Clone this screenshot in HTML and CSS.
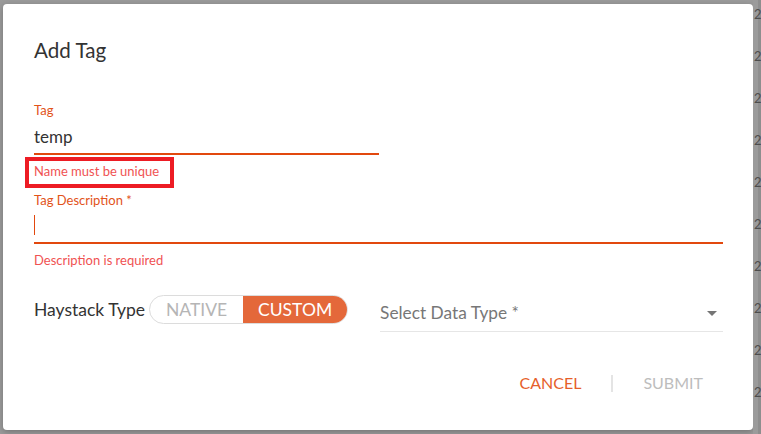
FILE: index.html
```html
<!DOCTYPE html>
<html lang="en">
<head>
<meta charset="utf-8">
<title>Add Tag</title>
<link rel="stylesheet" href="styles.css">
</head>
<body>
  <div class="dialog">
    <h2 class="title">Add Tag</h2>

    <div class="field field-tag">
      <div class="label">Tag</div>
      <div class="input">temp</div>
    </div>
    <div class="helper marked">Name must be unique</div>

    <div class="field field-desc">
      <div class="label">Tag Description *</div>
      <div class="input"><div class="caret"></div></div>
    </div>
    <div class="helper">Description is required</div>

    <div class="type-row">
      <div class="type-label">Haystack Type</div>
      <div class="toggle">
        <div class="seg seg-native">NATIVE</div>
        <div class="seg seg-custom">CUSTOM</div>
      </div>
      <div class="select">
        <span class="select-text">Select Data Type *</span>
        <span class="arrow"></span>
      </div>
    </div>

    <div class="actions">
      <div class="btn btn-cancel">CANCEL</div>
      <div class="sep"></div>
      <div class="btn btn-submit">SUBMIT</div>
    </div>
  </div>
  <div class="bg-col">
    <span>2</span><span>2</span><span>2</span><span>2</span><span>2</span><span>2</span><span>2</span><span>2</span><span>2</span><span>2</span>
  </div>
</body>
</html>
```

FILE: styles.css
```css
html, body {
  margin: 0;
  padding: 0;
}
body {
  width: 761px;
  height: 434px;
  overflow: hidden;
  background: #9b9b9b;
  display: flex;
  align-items: flex-start;
  padding: 4px 0 0 3px;
  box-sizing: border-box;
  font-family: Lato, "Open Sans", sans-serif;
}
.dialog {
  width: 750px;
  height: 426px;
  flex: none;
  background: #fff;
  border-radius: 4px;
  box-sizing: border-box;
  padding: 34px 30px 0 31px;
  box-shadow: 0 2px 6px rgba(0,0,0,0.25);
}
.title {
  margin: 0;
  font-size: 20.6px;
  line-height: 24px;
  font-weight: 400;
  color: #333;
}
.field-tag {
  width: 345px;
  margin-top: 40px;
}
.label {
  font-size: 13px;
  line-height: 16px;
  color: #e2531a;
}
.input {
  padding: 7px 0 4px;
  height: 24px;
  font-size: 17px;
  line-height: 24px;
  color: #333;
  border-bottom: 2px solid #e2480e;
}
.helper {
  margin-top: 8px;
  font-size: 13px;
  line-height: 16px;
  color: #f05252;
}
.helper.marked {
  width: fit-content;
  padding: 2px 11px 5px 5px;
  margin: 6px 0 -5px -5px;
  outline: 4px solid #ed1c24;
}
.field-desc {
  margin-top: 13px;
}
.field-desc .input {
  padding: 7px 0 3px;
}
.caret {
  width: 1px;
  height: 20px;
  background: #e2480e;
}
.type-row {
  display: flex;
  align-items: flex-start;
  margin-top: 27px;
}
.type-label {
  font-size: 17.5px;
  line-height: 29px;
  color: #333;
}
.toggle {
  display: flex;
  margin-left: 4px;
  width: 199px;
  height: 29px;
  box-sizing: border-box;
  border: 1px solid #dcdcdc;
  border-radius: 15px;
  overflow: hidden;
}
.seg {
  display: flex;
  align-items: center;
  justify-content: center;
  font-size: 17.5px;
}
.seg-native {
  width: 93px;
  color: #b5b5b5;
}
.seg-custom {
  flex: 1;
  background: #e4683a;
  color: #fff;
}
.select {
  display: flex;
  align-items: center;
  margin-left: 32px;
  margin-top: 6px;
  flex: 1;
  height: 24px;
  padding-bottom: 6px;
  border-bottom: 1px solid #e6e6e6;
}
.select-text {
  flex: 1;
  font-size: 17.3px;
  line-height: 24px;
  color: #777;
}
.arrow {
  width: 0;
  height: 0;
  border-left: 5px solid transparent;
  border-right: 5px solid transparent;
  border-top: 5px solid #757575;
  margin-right: 6px;
}
.actions {
  display: flex;
  justify-content: flex-end;
  align-items: center;
  margin-top: 39px;
}
.btn {
  padding: 0 20px;
  font-size: 16px;
  line-height: 24px;
}
.btn-cancel {
  color: #e65f2b;
}
.btn-submit {
  color: #bdbdbd;
}
.sep {
  width: 2px;
  height: 17px;
  margin: 0 10px;
  background: #e4e4e4;
}
.bg-col {
  width: 8px;
  flex: none;
  overflow: hidden;
  padding: 6px 0 0 1px;
  box-sizing: border-box;
  height: 434px;
  margin-top: -4px;
  background: linear-gradient(to right, #9b9b9b 0 5px, #8e8e8e 5px);
}
.bg-col span {
  display: block;
  height: 42px;
  font-size: 13px;
  line-height: 16px;
  color: #4d4d4d;
}
```
